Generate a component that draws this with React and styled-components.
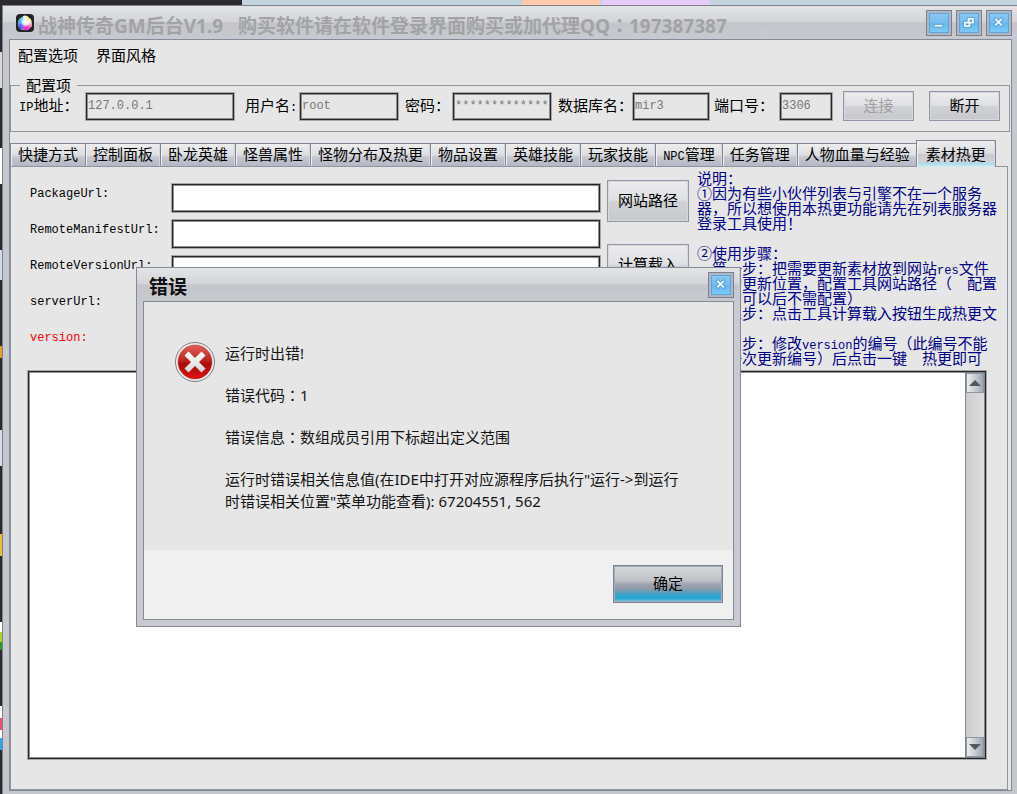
import React from "react";
import styled, { createGlobalStyle, css } from "styled-components";

const UI = '"Noto Sans", "Noto Sans CJK SC", sans-serif';
const SONG = '"Noto Sans CJK SC", sans-serif';
const MONO = '"Liberation Mono", "Noto Sans CJK SC", monospace';

const GlobalStyle = createGlobalStyle`
  *, *::before, *::after { box-sizing: border-box; }
  body { margin: 0; font-family: ${SONG}; font-size: 15px; color: #000; }
  button, input, textarea { font: inherit; color: inherit; margin: 0; border-radius: 0; }
`;

const Desktop = styled.div`
  position: relative;
  display: flex;
  min-height: 100vh;
  padding: 5px 0 0 2px;
  overflow: hidden;
  background:
    linear-gradient(90deg, #2b2b2d 242px, #c2d5de 242px 522px, #ffc9ac 522px 600px, #c9d3e4 600px 602px, #e6caf9 602px 710px, #c2d5de 710px) 0 0 / 100% 5px no-repeat,
    linear-gradient(#2b2b2d 52px, #d8d8d8 52px 88px, #2b2b2d 88px 148px, #fff 148px 184px, #2b2b2d 184px 250px, #cfdbe8 250px 280px, #2b2b2d 280px 346px, #e0a020 346px 358px, #2b2b2d 358px 430px, #d5dde6 430px 466px, #2b2b2d 466px 534px, #e8bd38 534px 556px, #2b2b2d 556px 622px, #fff 622px 632px, #a9d62a 632px 642px, #259a2b 642px 650px, #2b2b2d 650px 706px, #fff 706px 718px, #f0506e 718px 730px, #fff 730px 738px, #24a8f0 738px 750px, #2b2b2d 750px);
`;

const AppWindow = styled.div`
  flex: 1;
  min-width: 0;
  display: flex;
  flex-direction: column;
  border: solid #7d828c;
  border-width: 1px 0 0 1px;
  padding: 0 5px 3px 6px;
  background: #c6c7cc;
`;

const TitleBar = styled.header`
  display: flex;
  align-items: center;
  gap: 4px;
  height: 33px;
  margin: 0 -5px 0 -6px;
  padding: 0 5px 0 ${(p) => p.$indent}px;
  background: linear-gradient(#e2e4e6, #d2d4d7 48%, #c4c5ca 52%, #c6cacf);
  font-family: ${UI};
`;

const titleText = css`
  flex: 1;
  margin: 0;
  padding-top: 5px;
  font-size: 19px;
  line-height: 24px;
  font-weight: 700;
  white-space: pre;
`;

const AppTitle = styled.h1`
  ${titleText}
  color: #a2a3a5;
`;

const DialogTitle = styled.h2`
  ${titleText}
  color: #111;
`;

const CenteredMark = styled.span`
  font-family: "Noto Sans CJK TC", sans-serif;
`;

const CaptionButton = styled.button`
  display: grid;
  place-items: center;
  width: 26px;
  height: 26px;
  padding: 2px;
  border: 1px solid #7b8090;
  background: #b2b6c2;
  svg {
    display: block;
    width: 20px;
    height: 20px;
    border: 1px solid #5ba5dc;
    background: linear-gradient(#8ac8f0, #74bdee 50%, #66b8f0 52%, #7ccaf8);
  }
`;

const Client = styled.main`
  flex: 1;
  display: flex;
  flex-direction: column;
  border: 1px solid #858a98;
  background: #e6e6e6;
`;

const MenuBar = styled.nav`
  display: flex;
  gap: 18px;
  height: 39px;
  padding: 4px 8px;
`;

const MenuItem = styled.button`
  border: 0;
  padding: 0;
  background: none;
  height: 22px;
  line-height: 22px;
  font-family: ${UI};
  white-space: nowrap;
`;

const ConfigGroup = styled.fieldset`
  display: block;
  margin: 0 1px 0 0;
  padding: 0 8px 10px;
  border: 1px solid #9096a2;
  min-width: 0;
`;

const Legend = styled.legend`
  margin-left: 1px;
  padding: 0 6px;
  line-height: 12px;
`;

const ConfigRow = styled.div`
  display: flex;
  align-items: center;
`;

const Field = styled.div`
  display: flex;
  align-items: center;
  margin-left: ${(p) => p.$gap || 0}px;
`;

const FieldLabel = styled.label`
  width: ${(p) => p.$width}px;
  padding-bottom: 3px;
  line-height: 24px;
  white-space: nowrap;
`;

const Latin = styled.span`
  font-family: ${MONO};
  font-size: 12px;
  line-height: 1;
`;

const boxed = css`
  border: 1px solid #262626;
  box-shadow: 0 0 0 1px #a8a8a8, inset 0 0 0 1px #8f8f8f;
  outline: 0;
`;

const ConfigInput = styled.input`
  ${boxed}
  width: ${(p) => p.$width}px;
  height: 27px;
  padding: 0 1px;
  background: #e6e6e6;
  color: #777;
  font-family: ${MONO};
  font-size: 12px;
`;

const GlossButton = styled.button`
  width: ${(p) => p.$width}px;
  height: ${(p) => p.$height}px;
  margin-left: ${(p) => p.$gap || 0}px;
  padding: 0 0 3px;
  border: 1px solid #8f96a6;
  background: linear-gradient(#ececee, #dfe0e3 48%, #d1d2d6 52%, #c6c8cc);
  box-shadow: inset 0 0 0 1px #d6d8dd;
  white-space: nowrap;
  &:disabled { color: #a0a0a0; }
`;

const TabStrip = styled.div`
  display: flex;
  align-items: flex-end;
  height: 26px;
  margin-top: 8px;
  padding-left: 1px;
`;

const Tab = styled.button`
  height: 23px;
  padding: 0 7px 3px;
  border: solid #7f8593;
  border-width: 1px 1px 0 0;
  background: linear-gradient(#eeeeef, #dddee1 50%, #c6c8cf 60%, #b4b8c4);
  box-shadow: inset 1px 0 #f0f0f2, inset -1px 0 #d5d8de;
  line-height: 19px;
  white-space: nowrap;
  &:first-child { box-shadow: -1px 0 #7f8593, inset 1px 0 #f0f0f2; }
  ${(p) => p.$active && css`
    position: relative;
    height: 27px;
    margin: 0 0 -1px -2px;
    padding: 0 9px 2px;
    border-width: 1px 1px 0;
    background: linear-gradient(#eeeeef, #dcdde0 45%, #c8c9cd 55%, #cfd3d8 78%, #a8ddf0 88%, #d8eaf0);
  `}
`;

const TabPanel = styled.section`
  flex: 1;
  display: flex;
  flex-direction: column;
  margin: 0 3px 0 0;
  border: 1px solid #8f95a3;
`;

const FormArea = styled.div`
  display: flex;
  padding-left: 19px;
`;

const LabelColumn = styled.div`
  display: flex;
  flex-direction: column;
  width: 142px;
  padding-top: 9px;
`;

const UrlLabel = styled.label`
  height: 36px;
  line-height: 36px;
  font-family: ${MONO};
  font-size: 12px;
  color: ${(p) => (p.$alert ? "#f00" : "#000")};
`;

const InputColumn = styled.div`
  flex: 1;
  min-width: 0;
  display: flex;
  flex-direction: column;
  gap: 8px;
  padding-top: 17px;
`;

const UrlInput = styled.input`
  ${boxed}
  width: 100%;
  height: 28px;
  padding: 0 2px;
  background: #fff;
`;

const ActionColumn = styled.div`
  display: flex;
  flex-direction: column;
  gap: 22px;
  padding: 13px 8px 0 7px;
`;

const Notes = styled.div`
  width: 310px;
  padding-top: 3px;
  color: #000086;
`;

const NoteLine = styled.p`
  margin: 0;
  height: 15px;
  line-height: 15px;
  white-space: pre;
`;

const LogBox = styled.div`
  ${boxed}
  flex: 1;
  display: flex;
  min-height: 120px;
  margin: 6px 21px 30px 17px;
  background: #fff;
`;

const LogText = styled.textarea`
  flex: 1;
  min-width: 0;
  padding: 4px;
  border: 0;
  outline: 0;
  resize: none;
  background: transparent;
`;

const ScrollBar = styled.div`
  display: flex;
  flex-direction: column;
  justify-content: space-between;
  width: 20px;
  border: 1px solid #7d8594;
  background: linear-gradient(90deg, #ccc, #dedede);
`;

const ScrollButton = styled.button`
  display: grid;
  place-items: center;
  height: 20px;
  padding: 0;
  border: 1px solid #8c94a2;
  background: linear-gradient(90deg, #ececee, #c9ccd2 50%, #9fa6b2);
`;

const Dialog = styled.div`
  position: absolute;
  left: 136px;
  top: 267px;
  width: 605px;
  padding: 0 6px 6px;
  border: 1px solid #858a98;
  background: #c8cacf;
`;

const DialogClient = styled.div`
  border: 1px solid #858a98;
  background: #e6e6e6;
`;

const DialogMessage = styled.div`
  display: flex;
  align-items: flex-start;
  gap: 10px;
  padding: 40px 30px 38px 31px;
`;

const MessageText = styled.div`
  display: grid;
  gap: 20px;
  font-family: ${UI};
  line-height: 22px;
  color: #141414;
  p { margin: 0; white-space: nowrap; }
`;

const DialogFooter = styled.footer`
  display: flex;
  justify-content: flex-end;
  padding: 15px 10px 16px;
  background: #f0f0f0;
`;

const ConfirmButton = styled.button`
  width: 110px;
  height: 38px;
  padding: 0 0 3px;
  border: 1px solid #7d8496;
  background: linear-gradient(#d6d7d9, #c0c2c7 40%, #a2a6b1 50%, #929aa8 62%, #3aa3c8 80%, #1fa8d6 90%, #8cc3d8);
  box-shadow: inset 0 0 0 1px #a3aaba;
  font-family: ${UI};
`;

function AppIcon() {
  return (
    <svg width="18" height="18" viewBox="0 0 18 18" aria-hidden="true">
      <defs>
        <clipPath id="orb"><path d="M9 1.500Q12 1.500 13 4Q16 5 15.500 8.500Q17 12 14 14Q11 17.500 8 15.500Q4 16.500 3 13Q1 10 2.500 7.500Q3 4 6 3.500Q7 1.500 9 1.500z" /></clipPath>
        <filter id="soft"><feGaussianBlur stdDeviation="1" /></filter>
      </defs>
      <rect width="18" height="18" rx="4" fill="#242427" />
      <g clipPath="url(#orb)">
        <rect width="18" height="18" fill="#fff" />
        <g filter="url(#soft)">
          <circle cx="4" cy="6" r="4" fill="#35c4f5" />
          <circle cx="13" cy="4" r="3" fill="#f7ee5a" />
          <circle cx="4" cy="13" r="4" fill="#4f5df2" />
          <circle cx="11" cy="15" r="4" fill="#f02ac4" />
          <circle cx="15" cy="11" r="2" fill="#f77f9a" />
          <circle cx="9" cy="8" r="3" fill="#fff" />
        </g>
      </g>
    </svg>
  );
}

const glyphs = {
  minimize: <path d="M6 13h7" />,
  restore: <path d="M9.500 8V5.500h5v4H12M5.500 9.500h5v4h-5z" />,
  close: <path d="M6.500 6l6 6M12.500 6l-6 6" />,
};

function CaptionIcon({ name }) {
  return (
    <svg viewBox="0 0 20 20" fill="none" strokeLinecap="square" aria-hidden="true">
      <g stroke="#4690c6" strokeWidth="4" opacity="0.700">{glyphs[name]}</g>
      <g stroke="#f2f6f9" strokeWidth="2">{glyphs[name]}</g>
    </svg>
  );
}

function ErrorIcon() {
  return (
    <svg width="40" height="40" viewBox="0 0 40 40" role="img" aria-label="错误">
      <defs>
        <linearGradient id="red" x1="0" y1="0" x2="0" y2="1">
          <stop offset="0" stopColor="#e0605a" />
          <stop offset="0.450" stopColor="#bf2420" />
          <stop offset="0.550" stopColor="#a80c0c" />
          <stop offset="1" stopColor="#e01010" />
        </linearGradient>
        <linearGradient id="cross" x1="0" y1="0" x2="0" y2="1">
          <stop offset="0" stopColor="#fff" />
          <stop offset="1" stopColor="#d4d4d4" />
        </linearGradient>
      </defs>
      <circle cx="20" cy="20" r="19.500" fill="#efefef" stroke="#7b7f80" />
      <circle cx="20" cy="20" r="17" fill="url(#red)" stroke="#a33" strokeWidth="0.500" />
      <path d="M13.500 9.500L20 16l6.500-6.500l4 4L24 20l6.500 6.500l-4 4L20 24l-6.500 6.500l-4-4L16 20l-6.500-6.500z" fill="url(#cross)" />
    </svg>
  );
}

function Arrow({ down }) {
  return (
    <svg width="12" height="6" viewBox="0 0 12 6" aria-hidden="true">
      <path d={down ? "M0 0h12L6 6z" : "M0 6h12L6 0z"} fill="#53585f" />
    </svg>
  );
}

const fields = [
  { id: "ip", label: <><Latin>IP</Latin>地址：</>, labelWidth: 67, width: 148, value: "127.0.0.1" },
  { id: "user", label: <>用户名<Latin>:</Latin></>, labelWidth: 55, width: 98, value: "root", gap: 11 },
  { id: "password", label: "密码：", labelWidth: 48, width: 98, value: "*************", gap: 7 },
  { id: "database", label: "数据库名：", labelWidth: 75, width: 76, value: "mir3", gap: 7 },
  { id: "port", label: "端口号：", labelWidth: 66, width: 52, value: "3306", gap: 5 },
];

const tabs = [
  "快捷方式", "控制面板", "卧龙英雄", "怪兽属性", "怪物分布及热更", "物品设置",
  "英雄技能", "玩家技能", <><Latin>NPC</Latin>管理</>, "任务管理", "人物血量与经验", "素材热更",
];

const urls = ["PackageUrl", "RemoteManifestUrl", "RemoteVersionUrl", "serverUrl", "version"];

const notes = [
  "说明：",
  "①因为有些小伙伴列表与引擎不在一个服务",
  "器，所以想使用本热更功能请先在列表服务器",
  "登录工具使用！",
  "",
  "②使用步骤：",
  <>　第一步：把需要更新素材放到网站<Latin>res</Latin>文件</>,
  "夹里的更新位置，配置工具网站路径（　配置",
  "一次即可以后不需配置）",
  "　第二步：点击工具计算载入按钮生成热更文",
  "件",
  <>　第三步：修改<Latin>version</Latin>的编号（此编号不能</>,
  "是上一次更新编号）后点击一键　热更即可",
];

export default function App() {
  return (
    <>
      <GlobalStyle />
      <Desktop>
        <AppWindow>
          <TitleBar $indent={13}>
            <AppIcon />
            <AppTitle>战神传奇GM后台V1.9   购买软件请在软件登录界面购买或加代理QQ<CenteredMark>：</CenteredMark>197387387</AppTitle>
            <CaptionButton aria-label="最小化"><CaptionIcon name="minimize" /></CaptionButton>
            <CaptionButton aria-label="还原"><CaptionIcon name="restore" /></CaptionButton>
            <CaptionButton aria-label="关闭"><CaptionIcon name="close" /></CaptionButton>
          </TitleBar>
          <Client>
            <MenuBar>
              <MenuItem>配置选项</MenuItem>
              <MenuItem>界面风格</MenuItem>
            </MenuBar>
            <ConfigGroup>
              <Legend>配置项</Legend>
              <ConfigRow>
                {fields.map((f) => (
                  <Field key={f.id} $gap={f.gap}>
                    <FieldLabel htmlFor={f.id} $width={f.labelWidth}>{f.label}</FieldLabel>
                    <ConfigInput id={f.id} $width={f.width} defaultValue={f.value} />
                  </Field>
                ))}
                <GlossButton $width={71} $height={30} $gap={11} disabled>连接</GlossButton>
                <GlossButton $width={71} $height={30} $gap={15}>断开</GlossButton>
              </ConfigRow>
            </ConfigGroup>
            <TabStrip role="tablist">
              {tabs.map((t, i) => (
                <Tab key={i} role="tab" aria-selected={i === 11} $active={i === 11}>{t}</Tab>
              ))}
            </TabStrip>
            <TabPanel role="tabpanel">
              <FormArea>
                <LabelColumn>
                  {urls.map((u) => (
                    <UrlLabel key={u} htmlFor={u} $alert={u === "version"}>{u}:</UrlLabel>
                  ))}
                </LabelColumn>
                <InputColumn>
                  {urls.map((u) => <UrlInput key={u} id={u} />)}
                </InputColumn>
                <ActionColumn>
                  <GlossButton $width={82} $height={42}>网站路径</GlossButton>
                  <GlossButton $width={82} $height={42}>计算载入</GlossButton>
                </ActionColumn>
                <Notes>
                  {notes.map((n, i) => <NoteLine key={i}>{n}</NoteLine>)}
                </Notes>
              </FormArea>
              <LogBox>
                <LogText aria-label="日志" />
                <ScrollBar>
                  <ScrollButton aria-label="向上滚动"><Arrow /></ScrollButton>
                  <ScrollButton aria-label="向下滚动"><Arrow down /></ScrollButton>
                </ScrollBar>
              </LogBox>
            </TabPanel>
          </Client>
        </AppWindow>
        <Dialog role="alertdialog" aria-labelledby="error-title">
          <TitleBar $indent={12}>
            <DialogTitle id="error-title">错误</DialogTitle>
            <CaptionButton aria-label="关闭"><CaptionIcon name="close" /></CaptionButton>
          </TitleBar>
          <DialogClient>
            <DialogMessage>
              <ErrorIcon />
              <MessageText>
                <p>运行时出错!</p>
                <p>错误代码<CenteredMark>：</CenteredMark>1</p>
                <p>错误信息<CenteredMark>：</CenteredMark>数组成员引用下标超出定义范围</p>
                <p>
                  运行时错误相关信息值(在IDE中打开对应源程序后执行"运行-&gt;到运行<br />
                  时错误相关位置"菜单功能查看): 67204551, 562
                </p>
              </MessageText>
            </DialogMessage>
            <DialogFooter>
              <ConfirmButton>确定</ConfirmButton>
            </DialogFooter>
          </DialogClient>
        </Dialog>
      </Desktop>
    </>
  );
}
